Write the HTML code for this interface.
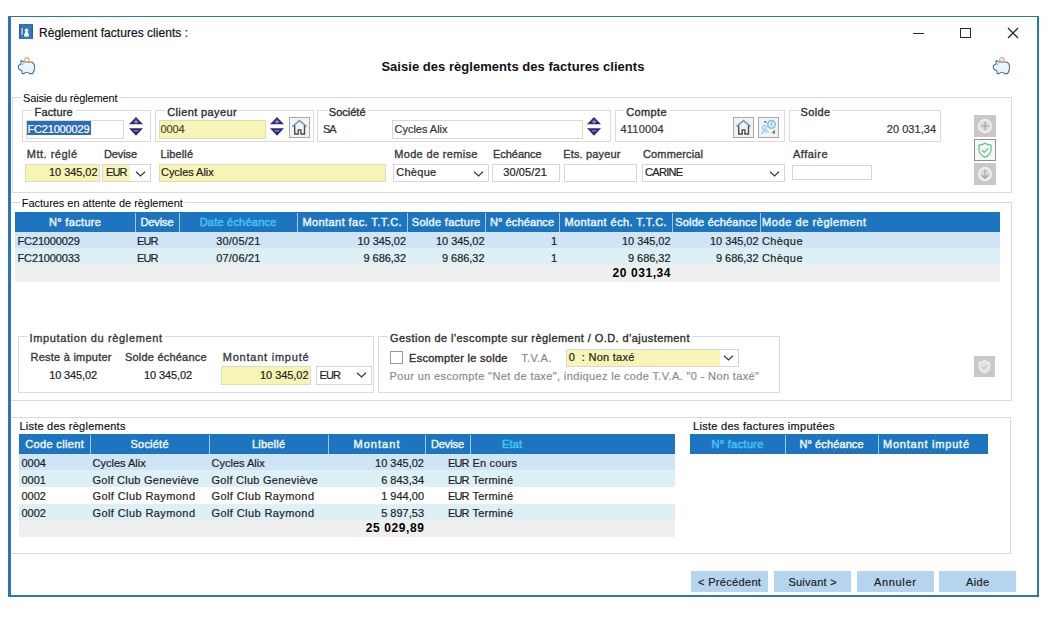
<!DOCTYPE html>
<html><head><meta charset="utf-8"><title>Règlement factures clients</title>
<style>
*{box-sizing:border-box;margin:0;padding:0}
html,body{width:1058px;height:620px;background:#fff;overflow:hidden}
body{position:relative;font-family:"Liberation Sans", sans-serif;font-size:11px;color:#222}
.a{position:absolute}
.t{white-space:pre;-webkit-text-stroke:0.2px currentColor}
svg{overflow:visible}
</style></head><body>
<div class="a" style="left:8px;top:16px;width:1031px;height:581px;border:2px solid #2a76be;border-top-width:1px;border-left-width:3px;"></div>
<svg class="a" style="left:19px;top:24px" width="14" height="15" viewBox="0 0 14 15">
<rect x="0" y="0" width="14" height="15" fill="#3a79b8"/>
<rect x="0" y="0" width="1.5" height="15" fill="#2a64a0"/>
<rect x="12.5" y="0" width="1.5" height="15" fill="#2a64a0"/>
<rect x="0" y="0" width="14" height="1.5" fill="#3f6fa8"/>
<rect x="2.3" y="4" width="1.7" height="6.8" fill="#a9c6e2"/>
<rect x="4.4" y="3" width="0.8" height="10" fill="#2d66a3"/>
<circle cx="7.5" cy="6.2" r="1.8" fill="#eaf8fd"/>
<path d="M6.4 7.5 L8.6 7.5 Q9.4 9.6 10.1 11.2 Q9.9 12.8 7.5 12.8 Q5.1 12.8 4.9 11.2 Q5.6 9.6 6.4 7.5 Z" fill="#eaf8fd"/>
</svg>
<div class="a t" style="left:39.00px;top:26.84px;font-size:12px;line-height:12px;color:#111;font-weight:400;letter-spacing:0.034px;">Règlement factures clients :</div>
<div class="a" style="left:913px;top:32.5px;width:11px;height:1.3px;background:#2a2a2a;"></div>
<div class="a" style="left:960px;top:28px;width:11px;height:10px;border:1.3px solid #2a2a2a;"></div>
<svg class="a" style="left:1007px;top:27px" width="12" height="12" viewBox="0 0 12 12"><path d="M1 1 L11 11 M11 1 L1 11" stroke="#2a2a2a" stroke-width="1.3"/></svg>
<svg class="a" style="left:17px;top:56px" width="19" height="19" viewBox="0 0 19 19">
<path d="M4 4.5 L7 6 L13 6 Q17.6 6 17.6 11.3 Q17.6 15 15.6 17.6 L12.6 17.6 Q11.5 16.2 9.8 16.2 Q8 16.2 7 17.6 L5.2 17.6 L4.8 14.6 Q2.2 14.2 1.4 12.6 L1.4 9.4 Q3 8.6 4 8 Z" fill="#eaf6fc" stroke="#44729c" stroke-width="1.1" stroke-linejoin="round"/>
<circle cx="9.8" cy="3.9" r="2.2" fill="none" stroke="#f0a262" stroke-width="1.2"/>
<path d="M6 7.5 L5.5 9" stroke="#5a8cb4" stroke-width="0.8"/>
</svg>
<svg class="a" style="left:992px;top:56px" width="19" height="19" viewBox="0 0 19 19">
<path d="M4 4.5 L7 6 L13 6 Q17.6 6 17.6 11.3 Q17.6 15 15.6 17.6 L12.6 17.6 Q11.5 16.2 9.8 16.2 Q8 16.2 7 17.6 L5.2 17.6 L4.8 14.6 Q2.2 14.2 1.4 12.6 L1.4 9.4 Q3 8.6 4 8 Z" fill="#eaf6fc" stroke="#44729c" stroke-width="1.1" stroke-linejoin="round"/>
<circle cx="9.8" cy="3.9" r="2.2" fill="none" stroke="#f0a262" stroke-width="1.2"/>
<path d="M6 7.5 L5.5 9" stroke="#5a8cb4" stroke-width="0.8"/>
</svg>
<div class="a t" style="left:212.92px;width:600px;text-align:center;top:60.00px;font-size:13px;line-height:13px;color:#111;font-weight:700;-webkit-text-stroke:0;letter-spacing:0.035px;">Saisie des règlements des factures clients</div>
<div class="a" style="left:12px;top:97px;width:1000px;height:96px;border:1px solid #dadada;"></div>
<div class="a t" style="left:23.00px;top:92.69px;font-size:11px;line-height:11px;color:#000;font-weight:400;-webkit-text-stroke:0;letter-spacing:-0.151px;background:#fff;padding:0 2px;margin-left:-2px;">Saisie du règlement</div>
<div class="a" style="left:22px;top:110px;width:129px;height:32px;border:1px solid #dadada;"></div>
<div class="a t" style="left:34.60px;top:107.29px;font-size:11px;line-height:11px;color:#222;font-weight:400;-webkit-text-stroke:0.35px #3a3a3a;letter-spacing:0.118px;background:#fff;padding:0 2px;margin-left:-2px;">Facture</div>
<div class="a" style="left:26px;top:120px;width:98px;height:19px;background:#fff;border:1px solid #d7d7d7;"></div>
<div class="a" style="left:27px;top:121px;width:64px;height:13.5px;background:#2d6db6;"></div>
<div class="a t" style="left:27.50px;top:123.59px;font-size:11px;line-height:11px;color:#fff;font-weight:400;letter-spacing:-0.179px;">FC21000029</div>
<svg class="a" style="left:129px;top:117px" width="15" height="20" viewBox="0 0 15 20">
<path d="M7 0 L14 7.3 L0 7.3 Z" fill="#2b2b78"/>
<path d="M0 11.2 L14 11.2 L7 18.8 Z" fill="#2b2b78"/>
<rect x="4.8" y="4.2" width="4.4" height="1.1" fill="#9c9cd8"/><rect x="6.5" y="2.6" width="1.1" height="4.2" fill="#9c9cd8"/>
<rect x="4.8" y="13.3" width="4.4" height="1.1" fill="#9c9cd8"/>
</svg>
<div class="a" style="left:155px;top:110px;width:159px;height:32px;border:1px solid #dadada;"></div>
<div class="a t" style="left:167.20px;top:107.29px;font-size:11px;line-height:11px;color:#222;font-weight:400;-webkit-text-stroke:0.35px #3a3a3a;letter-spacing:0.390px;background:#fff;padding:0 2px;margin-left:-2px;">Client payeur</div>
<div class="a" style="left:159px;top:120px;width:107px;height:19px;background:#f7f5b6;border:1px solid #deddc4;"></div>
<div class="a t" style="left:160.50px;top:123.69px;font-size:11px;line-height:11px;color:#4a4a2a;font-weight:400;letter-spacing:-0.157px;">0004</div>
<svg class="a" style="left:270px;top:117px" width="15" height="20" viewBox="0 0 15 20">
<path d="M7 0 L14 7.3 L0 7.3 Z" fill="#2b2b78"/>
<path d="M0 11.2 L14 11.2 L7 18.8 Z" fill="#2b2b78"/>
<rect x="4.8" y="4.2" width="4.4" height="1.1" fill="#9c9cd8"/><rect x="6.5" y="2.6" width="1.1" height="4.2" fill="#9c9cd8"/>
<rect x="4.8" y="13.3" width="4.4" height="1.1" fill="#9c9cd8"/>
</svg>
<div class="a" style="left:289px;top:117px;width:21px;height:21px;border:1.6px solid #a9a9a9;background:#f1f3f5"></div>
<svg class="a" style="left:289px;top:117px" width="21" height="21" viewBox="0 0 21 21">
<path d="M3.4 9.6 L10.5 3.6 L17.6 9.6" fill="none" stroke="#6e9fbf" stroke-width="1.5"/>
<path d="M5.7 8.6 L5.7 17 L9.2 17 L9.2 12.8 L11.9 12.8 L11.9 17 L15.5 17 L15.5 8.6" fill="none" stroke="#484848" stroke-width="1.35"/>
</svg>
<div class="a" style="left:317px;top:110px;width:294px;height:32px;border:1px solid #dadada;"></div>
<div class="a t" style="left:328.80px;top:107.29px;font-size:11px;line-height:11px;color:#222;font-weight:400;-webkit-text-stroke:0.35px #3a3a3a;letter-spacing:0.001px;background:#fff;padding:0 2px;margin-left:-2px;">Société</div>
<div class="a t" style="left:323.00px;top:123.69px;font-size:11px;line-height:11px;color:#333;font-weight:400;letter-spacing:-1.075px;">SA</div>
<div class="a" style="left:392px;top:120px;width:191px;height:19px;background:#fff;border:1px solid #d7d7d7;"></div>
<div class="a t" style="left:394.50px;top:123.69px;font-size:11px;line-height:11px;color:#333;font-weight:400;letter-spacing:-0.018px;">Cycles Alix</div>
<svg class="a" style="left:587px;top:117px" width="15" height="20" viewBox="0 0 15 20">
<path d="M7 0 L14 7.3 L0 7.3 Z" fill="#2b2b78"/>
<path d="M0 11.2 L14 11.2 L7 18.8 Z" fill="#2b2b78"/>
<rect x="4.8" y="4.2" width="4.4" height="1.1" fill="#9c9cd8"/><rect x="6.5" y="2.6" width="1.1" height="4.2" fill="#9c9cd8"/>
<rect x="4.8" y="13.3" width="4.4" height="1.1" fill="#9c9cd8"/>
</svg>
<div class="a" style="left:615px;top:110px;width:170px;height:32px;border:1px solid #dadada;"></div>
<div class="a t" style="left:626.20px;top:107.29px;font-size:11px;line-height:11px;color:#222;font-weight:400;-webkit-text-stroke:0.35px #3a3a3a;letter-spacing:0.397px;background:#fff;padding:0 2px;margin-left:-2px;">Compte</div>
<div class="a t" style="left:620.50px;top:123.69px;font-size:11px;line-height:11px;color:#333;font-weight:400;letter-spacing:0.199px;">4110004</div>
<div class="a" style="left:733px;top:117px;width:21px;height:21px;border:1.6px solid #a9a9a9;background:#f1f3f5"></div>
<svg class="a" style="left:733px;top:117px" width="21" height="21" viewBox="0 0 21 21">
<path d="M3.4 9.6 L10.5 3.6 L17.6 9.6" fill="none" stroke="#6e9fbf" stroke-width="1.5"/>
<path d="M5.7 8.6 L5.7 17 L9.2 17 L9.2 12.8 L11.9 12.8 L11.9 17 L15.5 17 L15.5 8.6" fill="none" stroke="#484848" stroke-width="1.35"/>
</svg>
<div class="a" style="left:758px;top:117px;width:21px;height:21px;border:1.6px solid #a9a9a9;background:#f1f3f5"></div>
<svg class="a" style="left:758px;top:117px" width="21" height="21" viewBox="0 0 21 21">
<circle cx="13.5" cy="7.4" r="3.8" fill="#d7f1fc" stroke="#7cc6ee" stroke-width="1.6"/>
<path d="M13.5 6.3 L13.5 8.3" stroke="#4a9ccc" stroke-width="1"/>
<circle cx="6.5" cy="10.5" r="2.3" fill="#bfe8fb" stroke="#8fd0f0" stroke-width="1"/>
<path d="M3.2 17.3 Q4.5 13.5 7 13.6 Q9.5 13.4 11 15.5" fill="#c8ecfb" stroke="#8fd0f0" stroke-width="1.1"/>
<path d="M14.5 16.2 L16.2 14.2 L16.2 16.8" fill="none" stroke="#5a5a5a" stroke-width="1.1"/>
<path d="M6.3 5.2 Q7.5 4 8.2 5.8" fill="none" stroke="#555" stroke-width="1.3"/>
</svg>
<div class="a" style="left:789px;top:110px;width:152px;height:32px;border:1px solid #dadada;"></div>
<div class="a t" style="left:800.50px;top:107.29px;font-size:11px;line-height:11px;color:#222;font-weight:400;-webkit-text-stroke:0.35px #3a3a3a;letter-spacing:0.341px;background:#fff;padding:0 2px;margin-left:-2px;">Solde</div>
<div class="a t" style="right:121.97px;top:123.69px;font-size:11px;line-height:11px;color:#333;font-weight:400;letter-spacing:0.033px;">20 031,34</div>
<div class="a t" style="left:26.80px;top:148.79px;font-size:11px;line-height:11px;color:#3a3a3a;font-weight:400;-webkit-text-stroke:0.35px #3a3a3a;letter-spacing:0.495px;">Mtt. réglé</div>
<div class="a t" style="left:104.00px;top:148.79px;font-size:11px;line-height:11px;color:#3a3a3a;font-weight:400;-webkit-text-stroke:0.35px #3a3a3a;letter-spacing:-0.125px;">Devise</div>
<div class="a t" style="left:160.50px;top:148.79px;font-size:11px;line-height:11px;color:#3a3a3a;font-weight:400;-webkit-text-stroke:0.35px #3a3a3a;letter-spacing:0.116px;">Libellé</div>
<div class="a t" style="left:394.20px;top:148.79px;font-size:11px;line-height:11px;color:#3a3a3a;font-weight:400;-webkit-text-stroke:0.35px #3a3a3a;letter-spacing:0.333px;">Mode de remise</div>
<div class="a t" style="left:493.00px;top:148.79px;font-size:11px;line-height:11px;color:#3a3a3a;font-weight:400;-webkit-text-stroke:0.35px #3a3a3a;letter-spacing:-0.032px;">Echéance</div>
<div class="a t" style="left:563.20px;top:148.79px;font-size:11px;line-height:11px;color:#3a3a3a;font-weight:400;-webkit-text-stroke:0.35px #3a3a3a;letter-spacing:0.156px;">Ets. payeur</div>
<div class="a t" style="left:643.00px;top:148.79px;font-size:11px;line-height:11px;color:#3a3a3a;font-weight:400;-webkit-text-stroke:0.35px #3a3a3a;letter-spacing:0.147px;">Commercial</div>
<div class="a t" style="left:793.00px;top:148.79px;font-size:11px;line-height:11px;color:#3a3a3a;font-weight:400;-webkit-text-stroke:0.35px #3a3a3a;letter-spacing:0.484px;">Affaire</div>
<div class="a" style="left:25px;top:164px;width:75px;height:18px;background:#f7f5b6;border:1px solid #deddc4;"></div>
<div class="a t" style="right:960.55px;top:167.19px;font-size:11px;line-height:11px;color:#222;font-weight:400;letter-spacing:-0.055px;">10 345,02</div>
<div class="a" style="left:102px;top:164px;width:49px;height:18px;background:#fff;border:1px solid #d7d7d7;"></div>
<div class="a" style="left:103px;top:165px;width:27px;height:16px;background:#f7f5b6;"></div>
<div class="a t" style="left:106.00px;top:167.19px;font-size:11px;line-height:11px;color:#222;font-weight:400;letter-spacing:-0.863px;">EUR</div>
<svg class="a" style="left:135px;top:170.5px" width="11" height="7" viewBox="0 0 11 7"><path d="M1 0.8 L5.5 5 L10 0.8" fill="none" stroke="#3a3a3a" stroke-width="1.2"/></svg>
<div class="a" style="left:159px;top:164px;width:227px;height:18px;background:#f7f5b6;border:1px solid #deddc4;"></div>
<div class="a t" style="left:161.00px;top:167.19px;font-size:11px;line-height:11px;color:#222;font-weight:400;letter-spacing:-0.048px;">Cycles Alix</div>
<div class="a" style="left:393px;top:164px;width:96px;height:18px;background:#fff;border:1px solid #d7d7d7;"></div>
<div class="a t" style="left:396.20px;top:167.19px;font-size:11px;line-height:11px;color:#222;font-weight:400;letter-spacing:0.293px;">Chèque</div>
<svg class="a" style="left:473px;top:170.5px" width="11" height="7" viewBox="0 0 11 7"><path d="M1 0.8 L5.5 5 L10 0.8" fill="none" stroke="#3a3a3a" stroke-width="1.2"/></svg>
<div class="a" style="left:492px;top:164px;width:68px;height:18px;background:#fff;border:1px solid #d7d7d7;"></div>
<div class="a t" style="left:503.20px;top:167.19px;font-size:11px;line-height:11px;color:#222;font-weight:400;letter-spacing:0.126px;">30/05/21</div>
<div class="a" style="left:564px;top:164px;width:73px;height:18px;background:#fff;border:1px solid #d7d7d7;"></div>
<div class="a" style="left:642px;top:164px;width:143px;height:18px;background:#fff;border:1px solid #d7d7d7;"></div>
<div class="a t" style="left:645.00px;top:167.19px;font-size:11px;line-height:11px;color:#222;font-weight:400;letter-spacing:-0.673px;">CARINE</div>
<svg class="a" style="left:769px;top:170.5px" width="11" height="7" viewBox="0 0 11 7"><path d="M1 0.8 L5.5 5 L10 0.8" fill="none" stroke="#3a3a3a" stroke-width="1.2"/></svg>
<div class="a" style="left:792px;top:165px;width:80px;height:15px;background:#fff;border:1px solid #d7d7d7;"></div>
<div class="a" style="left:974px;top:115px;width:22px;height:22px;background:#c8c8c8"></div>
<svg class="a" style="left:974px;top:115px" width="22" height="22" viewBox="0 0 22 22">
<circle cx="11" cy="11" r="6.3" fill="#dcdcdc" stroke="#f8f8f8" stroke-width="1.2"/>
<path d="M11 6.8 L11 15.2 M6.8 11 L15.2 11" stroke="#a3a3a3" stroke-width="1.1"/>
</svg>
<div class="a" style="left:974px;top:139px;width:22px;height:22px;border:1.5px solid #8e8e8e;background:#f7f7f7"></div>
<svg class="a" style="left:974px;top:139px" width="22" height="22" viewBox="0 0 22 22">
<path d="M11 4.3 Q14 6.2 17 6.2 L17 11 Q17 15.5 11 18.3 Q5 15.5 5 11 L5 6.2 Q8 6.2 11 4.3 Z" fill="#f4fbf7" stroke="#55c488" stroke-width="1.2"/>
<path d="M8 11.3 L10.3 13.5 L14.3 9.2" fill="none" stroke="#55c488" stroke-width="1.2"/>
</svg>
<div class="a" style="left:974px;top:163px;width:22px;height:22px;background:#c8c8c8"></div>
<svg class="a" style="left:974px;top:163px" width="22" height="22" viewBox="0 0 22 22">
<circle cx="11" cy="11" r="6.3" fill="#dcdcdc" stroke="#f8f8f8" stroke-width="1.2"/>
<path d="M11 6.8 L11 15.2 M7.8 12 L11 15.2 L14.2 12" fill="none" stroke="#a3a3a3" stroke-width="1.1"/>
</svg>
<div class="a" style="left:11px;top:202px;width:1001px;height:199px;border:1px solid #dadada;border-left:none;"></div>
<div class="a t" style="left:21.80px;top:197.79px;font-size:11px;line-height:11px;color:#000;font-weight:400;-webkit-text-stroke:0;letter-spacing:-0.034px;background:#fff;padding:0 2px;margin-left:-2px;">Factures en attente de règlement</div>
<div class="a" style="left:15px;top:212px;width:985px;height:19.7px;background:#1e75bf;"></div>
<div class="a" style="left:135px;top:213px;width:1px;height:18.7px;background:#9ccbee;"></div>
<div class="a" style="left:179px;top:213px;width:1px;height:18.7px;background:#9ccbee;"></div>
<div class="a" style="left:297px;top:213px;width:1px;height:18.7px;background:#9ccbee;"></div>
<div class="a" style="left:407px;top:213px;width:1px;height:18.7px;background:#9ccbee;"></div>
<div class="a" style="left:485px;top:213px;width:1px;height:18.7px;background:#9ccbee;"></div>
<div class="a" style="left:559px;top:213px;width:1px;height:18.7px;background:#9ccbee;"></div>
<div class="a" style="left:672px;top:213px;width:1px;height:18.7px;background:#9ccbee;"></div>
<div class="a" style="left:760px;top:213px;width:1px;height:18.7px;background:#9ccbee;"></div>
<div class="a t" style="left:15.17px;width:120px;text-align:center;top:216.89px;font-size:11px;line-height:11px;color:#eaf4fb;font-weight:400;-webkit-text-stroke:0.45px #eaf4fb;letter-spacing:0.330px;">N° facture</div>
<div class="a t" style="left:134.94px;width:44px;text-align:center;top:216.89px;font-size:11px;line-height:11px;color:#eaf4fb;font-weight:400;-webkit-text-stroke:0.45px #eaf4fb;letter-spacing:-0.125px;">Devise</div>
<div class="a t" style="left:179.11px;width:118px;text-align:center;top:216.89px;font-size:11px;line-height:11px;color:#45c4f6;font-weight:400;-webkit-text-stroke:0.45px #45c4f6;letter-spacing:0.225px;">Date échéance</div>
<div class="a t" style="left:297.21px;width:110px;text-align:center;top:216.89px;font-size:11px;line-height:11px;color:#eaf4fb;font-weight:400;-webkit-text-stroke:0.45px #eaf4fb;letter-spacing:0.428px;">Montant fac. T.T.C.</div>
<div class="a t" style="left:407.15px;width:78px;text-align:center;top:216.89px;font-size:11px;line-height:11px;color:#eaf4fb;font-weight:400;-webkit-text-stroke:0.45px #eaf4fb;letter-spacing:0.307px;">Solde facture</div>
<div class="a t" style="left:485.05px;width:74px;text-align:center;top:216.89px;font-size:11px;line-height:11px;color:#eaf4fb;font-weight:400;-webkit-text-stroke:0.45px #eaf4fb;letter-spacing:0.109px;">N° échéance</div>
<div class="a t" style="left:559.21px;width:113px;text-align:center;top:216.89px;font-size:11px;line-height:11px;color:#eaf4fb;font-weight:400;-webkit-text-stroke:0.45px #eaf4fb;letter-spacing:0.424px;">Montant éch. T.T.C.</div>
<div class="a t" style="left:672.11px;width:88px;text-align:center;top:216.89px;font-size:11px;line-height:11px;color:#eaf4fb;font-weight:400;-webkit-text-stroke:0.45px #eaf4fb;letter-spacing:0.216px;">Solde échéance</div>
<div class="a t" style="left:762.00px;top:216.89px;font-size:11px;line-height:11px;color:#eaf4fb;font-weight:400;-webkit-text-stroke:0.45px #eaf4fb;letter-spacing:0.576px;">Mode de règlement</div>
<div class="a" style="left:15px;top:232px;width:985px;height:16px;background:#cfe4f4;"></div>
<div class="a t" style="left:17.50px;top:236.49px;font-size:11px;line-height:11px;color:#1e1e1e;font-weight:400;letter-spacing:-0.134px;">FC21000029</div>
<div class="a t" style="left:137.00px;top:236.49px;font-size:11px;line-height:11px;color:#1e1e1e;font-weight:400;letter-spacing:-0.863px;">EUR</div>
<div class="a t" style="left:216.20px;top:236.49px;font-size:11px;line-height:11px;color:#1e1e1e;font-weight:400;letter-spacing:0.197px;">30/05/21</div>
<div class="a t" style="right:652.05px;top:236.49px;font-size:11px;line-height:11px;color:#1e1e1e;font-weight:400;letter-spacing:-0.055px;">10 345,02</div>
<div class="a t" style="right:573.55px;top:236.49px;font-size:11px;line-height:11px;color:#1e1e1e;font-weight:400;letter-spacing:-0.055px;">10 345,02</div>
<div class="a t" style="right:501.00px;top:236.49px;font-size:11px;line-height:11px;color:#1e1e1e;font-weight:400;">1</div>
<div class="a t" style="right:387.55px;top:236.49px;font-size:11px;line-height:11px;color:#1e1e1e;font-weight:400;letter-spacing:-0.055px;">10 345,02</div>
<div class="a t" style="right:299.55px;top:236.49px;font-size:11px;line-height:11px;color:#1e1e1e;font-weight:400;letter-spacing:-0.055px;">10 345,02</div>
<div class="a t" style="left:762.00px;top:236.49px;font-size:11px;line-height:11px;color:#1e1e1e;font-weight:400;letter-spacing:0.393px;">Chèque</div>
<div class="a" style="left:15px;top:248px;width:985px;height:17px;background:#dcf0f5;"></div>
<div class="a t" style="left:17.50px;top:252.79px;font-size:11px;line-height:11px;color:#1e1e1e;font-weight:400;letter-spacing:-0.134px;">FC21000033</div>
<div class="a t" style="left:137.00px;top:252.79px;font-size:11px;line-height:11px;color:#1e1e1e;font-weight:400;letter-spacing:-0.863px;">EUR</div>
<div class="a t" style="left:216.20px;top:252.79px;font-size:11px;line-height:11px;color:#1e1e1e;font-weight:400;letter-spacing:0.197px;">07/06/21</div>
<div class="a t" style="right:652.05px;top:252.79px;font-size:11px;line-height:11px;color:#1e1e1e;font-weight:400;letter-spacing:-0.046px;">9 686,32</div>
<div class="a t" style="right:573.55px;top:252.79px;font-size:11px;line-height:11px;color:#1e1e1e;font-weight:400;letter-spacing:-0.046px;">9 686,32</div>
<div class="a t" style="right:501.00px;top:252.79px;font-size:11px;line-height:11px;color:#1e1e1e;font-weight:400;">1</div>
<div class="a t" style="right:387.55px;top:252.79px;font-size:11px;line-height:11px;color:#1e1e1e;font-weight:400;letter-spacing:-0.046px;">9 686,32</div>
<div class="a t" style="right:299.55px;top:252.79px;font-size:11px;line-height:11px;color:#1e1e1e;font-weight:400;letter-spacing:-0.046px;">9 686,32</div>
<div class="a t" style="left:762.00px;top:252.79px;font-size:11px;line-height:11px;color:#1e1e1e;font-weight:400;letter-spacing:0.393px;">Chèque</div>
<div class="a" style="left:15px;top:265px;width:985px;height:17px;background:#f0efef;"></div>
<div class="a t" style="right:386.92px;top:267.44px;font-size:12px;line-height:12px;color:#000;font-weight:700;-webkit-text-stroke:0;letter-spacing:0.577px;">20 031,34</div>
<div class="a" style="left:18px;top:336px;width:356px;height:57px;border:1px solid #dadada;"></div>
<div class="a t" style="left:29.50px;top:333.39px;font-size:11px;line-height:11px;color:#333;font-weight:400;-webkit-text-stroke:0.35px #3a3a3a;letter-spacing:0.631px;background:#fff;padding:0 2px;margin-left:-2px;">Imputation du règlement</div>
<div class="a t" style="left:30.50px;top:351.99px;font-size:11px;line-height:11px;color:#3a3a3a;font-weight:400;-webkit-text-stroke:0.35px #3a3a3a;letter-spacing:0.240px;">Reste à imputer</div>
<div class="a t" style="left:124.90px;top:351.99px;font-size:11px;line-height:11px;color:#3a3a3a;font-weight:400;-webkit-text-stroke:0.35px #3a3a3a;letter-spacing:0.216px;">Solde échéance</div>
<div class="a t" style="left:222.70px;top:351.99px;font-size:11px;line-height:11px;color:#3a3a3a;font-weight:400;-webkit-text-stroke:0.35px #3a3a3a;letter-spacing:0.775px;">Montant imputé</div>
<div class="a t" style="left:49.20px;top:369.69px;font-size:11px;line-height:11px;color:#222;font-weight:400;letter-spacing:-0.130px;">10 345,02</div>
<div class="a t" style="left:143.90px;top:369.69px;font-size:11px;line-height:11px;color:#222;font-weight:400;letter-spacing:-0.092px;">10 345,02</div>
<div class="a" style="left:221px;top:366px;width:90px;height:18.5px;background:#f7f5b6;border:1px solid #deddc4;"></div>
<div class="a t" style="right:749.55px;top:369.69px;font-size:11px;line-height:11px;color:#222;font-weight:400;letter-spacing:-0.055px;">10 345,02</div>
<div class="a" style="left:316px;top:366px;width:56px;height:18.5px;background:#fff;border:1px solid #d7d7d7;"></div>
<div class="a t" style="left:319.50px;top:369.69px;font-size:11px;line-height:11px;color:#222;font-weight:400;letter-spacing:-0.863px;">EUR</div>
<svg class="a" style="left:355.5px;top:372px" width="11" height="7" viewBox="0 0 11 7"><path d="M1 0.8 L5.5 5 L10 0.8" fill="none" stroke="#3a3a3a" stroke-width="1.2"/></svg>
<div class="a" style="left:378px;top:336px;width:402px;height:57px;border:1px solid #dadada;"></div>
<div class="a t" style="left:390.00px;top:333.39px;font-size:11px;line-height:11px;color:#222;font-weight:400;-webkit-text-stroke:0.35px #3a3a3a;letter-spacing:0.441px;background:#fff;padding:0 2px;margin-left:-2px;">Gestion de l&#x27;escompte sur règlement / O.D. d&#x27;ajustement</div>
<div class="a" style="left:390px;top:351px;width:13px;height:13px;border:1px solid #9a9a9a;background:#fff;"></div>
<div class="a t" style="left:409.00px;top:352.69px;font-size:11px;line-height:11px;color:#222;font-weight:400;-webkit-text-stroke:0.35px #3a3a3a;letter-spacing:0.291px;">Escompter le solde</div>
<div class="a t" style="left:521.20px;top:352.69px;font-size:11px;line-height:11px;color:#8a8a8a;font-weight:400;letter-spacing:0.333px;">T.V.A.</div>
<div class="a" style="left:566px;top:349px;width:173px;height:18px;background:#fff;border:1px solid #d7d7d7;"></div>
<div class="a" style="left:567px;top:350px;width:153px;height:16px;background:#f7f5b6;"></div>
<div class="a t" style="left:568.70px;top:352.39px;font-size:11px;line-height:11px;color:#222;font-weight:400;letter-spacing:0.278px;">0  : Non taxé</div>
<svg class="a" style="left:723px;top:355px" width="11" height="7" viewBox="0 0 11 7"><path d="M1 0.8 L5.5 5 L10 0.8" fill="none" stroke="#3a3a3a" stroke-width="1.2"/></svg>
<div class="a t" style="left:389.50px;top:371.09px;font-size:11px;line-height:11px;color:#8c8c8c;font-weight:400;letter-spacing:0.370px;">Pour un escompte &quot;Net de taxe&quot;, indiquez le code T.V.A. &quot;0 - Non taxé&quot;</div>
<div class="a" style="left:974px;top:356px;width:21px;height:21px;background:#c8c8c8"></div>
<svg class="a" style="left:974px;top:356px" width="21" height="21" viewBox="0 0 21 21">
<path d="M10.5 4.5 Q13.2 6.2 15.8 6.2 L15.8 10.5 Q15.8 14.5 10.5 17 Q5.2 14.5 5.2 10.5 L5.2 6.2 Q7.8 6.2 10.5 4.5 Z" fill="#e2e2e2" stroke="#f2f2f2" stroke-width="1.1"/>
<path d="M8 10.6 L10 12.6 L13.2 9" fill="none" stroke="#c0c0c0" stroke-width="1.1"/>
</svg>
<div class="a" style="left:11px;top:417px;width:1000px;height:137px;border:1px solid #dadada;border-left:none;"></div>
<div class="a t" style="left:19.40px;top:421.49px;font-size:11px;line-height:11px;color:#111;font-weight:400;letter-spacing:0.237px;">Liste des règlements</div>
<div class="a" style="left:19px;top:434.3px;width:656px;height:19.5px;background:#1e75bf;"></div>
<div class="a" style="left:90px;top:435.3px;width:1px;height:18.5px;background:#9ccbee;"></div>
<div class="a" style="left:209px;top:435.3px;width:1px;height:18.5px;background:#9ccbee;"></div>
<div class="a" style="left:328px;top:435.3px;width:1px;height:18.5px;background:#9ccbee;"></div>
<div class="a" style="left:425px;top:435.3px;width:1px;height:18.5px;background:#9ccbee;"></div>
<div class="a" style="left:470px;top:435.3px;width:1px;height:18.5px;background:#9ccbee;"></div>
<div class="a t" style="left:19.18px;width:71px;text-align:center;top:439.49px;font-size:11px;line-height:11px;color:#eaf4fb;font-weight:400;-webkit-text-stroke:0.45px #eaf4fb;letter-spacing:0.367px;">Code client</div>
<div class="a t" style="left:90.11px;width:119px;text-align:center;top:439.49px;font-size:11px;line-height:11px;color:#eaf4fb;font-weight:400;-webkit-text-stroke:0.45px #eaf4fb;letter-spacing:0.218px;">Société</div>
<div class="a t" style="left:209.12px;width:119px;text-align:center;top:439.49px;font-size:11px;line-height:11px;color:#eaf4fb;font-weight:400;-webkit-text-stroke:0.45px #eaf4fb;letter-spacing:0.233px;">Libellé</div>
<div class="a t" style="left:328.52px;width:97px;text-align:center;top:439.49px;font-size:11px;line-height:11px;color:#eaf4fb;font-weight:400;-webkit-text-stroke:0.45px #eaf4fb;letter-spacing:1.042px;">Montant</div>
<div class="a t" style="left:424.96px;width:45px;text-align:center;top:439.49px;font-size:11px;line-height:11px;color:#eaf4fb;font-weight:400;-webkit-text-stroke:0.45px #eaf4fb;letter-spacing:-0.085px;">Devise</div>
<div class="a t" style="left:502.00px;top:439.49px;font-size:11px;line-height:11px;color:#45c4f6;font-weight:400;-webkit-text-stroke:0.45px #45c4f6;letter-spacing:0.144px;">Etat</div>
<div class="a" style="left:19px;top:454px;width:656px;height:16px;background:#cfe4f4;"></div>
<div class="a t" style="left:21.50px;top:458.09px;font-size:11px;line-height:11px;color:#1e1e1e;font-weight:400;">0004</div>
<div class="a t" style="left:92.50px;top:458.09px;font-size:11px;line-height:11px;color:#1e1e1e;font-weight:400;letter-spacing:0.002px;">Cycles Alix</div>
<div class="a t" style="left:211.50px;top:458.09px;font-size:11px;line-height:11px;color:#1e1e1e;font-weight:400;letter-spacing:0.002px;">Cycles Alix</div>
<div class="a t" style="right:634.00px;top:458.09px;font-size:11px;line-height:11px;color:#1e1e1e;font-weight:400;letter-spacing:-0.005px;">10 345,02</div>
<div class="a t" style="right:589.36px;top:458.09px;font-size:11px;line-height:11px;color:#1e1e1e;font-weight:400;letter-spacing:-0.863px;">EUR</div>
<div class="a t" style="left:472.50px;top:458.09px;font-size:11px;line-height:11px;color:#1e1e1e;font-weight:400;letter-spacing:0.156px;">En cours</div>
<div class="a" style="left:19px;top:470px;width:656px;height:17px;background:#dcf0f5;"></div>
<div class="a t" style="left:21.50px;top:474.69px;font-size:11px;line-height:11px;color:#1e1e1e;font-weight:400;">0001</div>
<div class="a t" style="left:92.50px;top:474.69px;font-size:11px;line-height:11px;color:#1e1e1e;font-weight:400;letter-spacing:0.261px;">Golf Club Geneviève</div>
<div class="a t" style="left:211.50px;top:474.69px;font-size:11px;line-height:11px;color:#1e1e1e;font-weight:400;letter-spacing:0.261px;">Golf Club Geneviève</div>
<div class="a t" style="right:634.00px;top:474.69px;font-size:11px;line-height:11px;color:#1e1e1e;font-weight:400;letter-spacing:-0.003px;">6 843,34</div>
<div class="a t" style="right:589.36px;top:474.69px;font-size:11px;line-height:11px;color:#1e1e1e;font-weight:400;letter-spacing:-0.863px;">EUR</div>
<div class="a t" style="left:472.50px;top:474.69px;font-size:11px;line-height:11px;color:#1e1e1e;font-weight:400;letter-spacing:0.229px;">Terminé</div>
<div class="a" style="left:19px;top:487px;width:656px;height:17px;background:#ffffff;"></div>
<div class="a t" style="left:21.50px;top:491.29px;font-size:11px;line-height:11px;color:#1e1e1e;font-weight:400;">0002</div>
<div class="a t" style="left:92.50px;top:491.29px;font-size:11px;line-height:11px;color:#1e1e1e;font-weight:400;letter-spacing:0.407px;">Golf Club Raymond</div>
<div class="a t" style="left:211.50px;top:491.29px;font-size:11px;line-height:11px;color:#1e1e1e;font-weight:400;letter-spacing:0.407px;">Golf Club Raymond</div>
<div class="a t" style="right:634.00px;top:491.29px;font-size:11px;line-height:11px;color:#1e1e1e;font-weight:400;letter-spacing:-0.003px;">1 944,00</div>
<div class="a t" style="right:589.36px;top:491.29px;font-size:11px;line-height:11px;color:#1e1e1e;font-weight:400;letter-spacing:-0.863px;">EUR</div>
<div class="a t" style="left:472.50px;top:491.29px;font-size:11px;line-height:11px;color:#1e1e1e;font-weight:400;letter-spacing:0.229px;">Terminé</div>
<div class="a" style="left:19px;top:504px;width:656px;height:16px;background:#dcf0f5;"></div>
<div class="a t" style="left:21.50px;top:507.89px;font-size:11px;line-height:11px;color:#1e1e1e;font-weight:400;">0002</div>
<div class="a t" style="left:92.50px;top:507.89px;font-size:11px;line-height:11px;color:#1e1e1e;font-weight:400;letter-spacing:0.407px;">Golf Club Raymond</div>
<div class="a t" style="left:211.50px;top:507.89px;font-size:11px;line-height:11px;color:#1e1e1e;font-weight:400;letter-spacing:0.407px;">Golf Club Raymond</div>
<div class="a t" style="right:634.00px;top:507.89px;font-size:11px;line-height:11px;color:#1e1e1e;font-weight:400;letter-spacing:-0.003px;">5 897,53</div>
<div class="a t" style="right:589.36px;top:507.89px;font-size:11px;line-height:11px;color:#1e1e1e;font-weight:400;letter-spacing:-0.863px;">EUR</div>
<div class="a t" style="left:472.50px;top:507.89px;font-size:11px;line-height:11px;color:#1e1e1e;font-weight:400;letter-spacing:0.229px;">Terminé</div>
<div class="a" style="left:19px;top:520px;width:656px;height:17px;background:#f0efef;"></div>
<div class="a t" style="right:633.40px;top:522.14px;font-size:12px;line-height:12px;color:#000;font-weight:700;-webkit-text-stroke:0;letter-spacing:0.602px;">25 029,89</div>
<div class="a t" style="left:693.00px;top:421.49px;font-size:11px;line-height:11px;color:#111;font-weight:400;letter-spacing:0.292px;">Liste des factures imputées</div>
<div class="a" style="left:690px;top:434.3px;width:298px;height:19.5px;background:#1e75bf;"></div>
<div class="a" style="left:785px;top:435.3px;width:1px;height:18.5px;background:#9ccbee;"></div>
<div class="a" style="left:878px;top:435.3px;width:1px;height:18.5px;background:#9ccbee;"></div>
<div class="a t" style="left:690.17px;width:95px;text-align:center;top:439.49px;font-size:11px;line-height:11px;color:#45c4f6;font-weight:400;-webkit-text-stroke:0.45px #45c4f6;letter-spacing:0.330px;">N° facture</div>
<div class="a t" style="left:785.05px;width:93px;text-align:center;top:439.49px;font-size:11px;line-height:11px;color:#eaf4fb;font-weight:400;-webkit-text-stroke:0.45px #eaf4fb;letter-spacing:0.109px;">N° échéance</div>
<div class="a t" style="left:883.00px;top:439.49px;font-size:11px;line-height:11px;color:#eaf4fb;font-weight:400;-webkit-text-stroke:0.45px #eaf4fb;letter-spacing:0.783px;">Montant imputé</div>
<div class="a" style="left:691px;top:570.5px;width:77px;height:21px;background:#b4d4ef;"></div>
<div class="a t" style="left:691.16px;width:77px;text-align:center;top:577.39px;font-size:11px;line-height:11px;color:#222;font-weight:400;letter-spacing:0.327px;">&lt; Précédent</div>
<div class="a" style="left:774px;top:570.5px;width:77px;height:21px;background:#b4d4ef;"></div>
<div class="a t" style="left:774.13px;width:77px;text-align:center;top:577.39px;font-size:11px;line-height:11px;color:#222;font-weight:400;letter-spacing:0.254px;">Suivant &gt;</div>
<div class="a" style="left:856.5px;top:570.5px;width:77px;height:21px;background:#b4d4ef;"></div>
<div class="a t" style="left:856.82px;width:77px;text-align:center;top:577.39px;font-size:11px;line-height:11px;color:#222;font-weight:400;letter-spacing:0.647px;">Annuler</div>
<div class="a" style="left:939px;top:570.5px;width:77px;height:21px;background:#b4d4ef;"></div>
<div class="a t" style="left:939.18px;width:77px;text-align:center;top:577.39px;font-size:11px;line-height:11px;color:#222;font-weight:400;letter-spacing:0.361px;">Aide</div>
</body></html>
